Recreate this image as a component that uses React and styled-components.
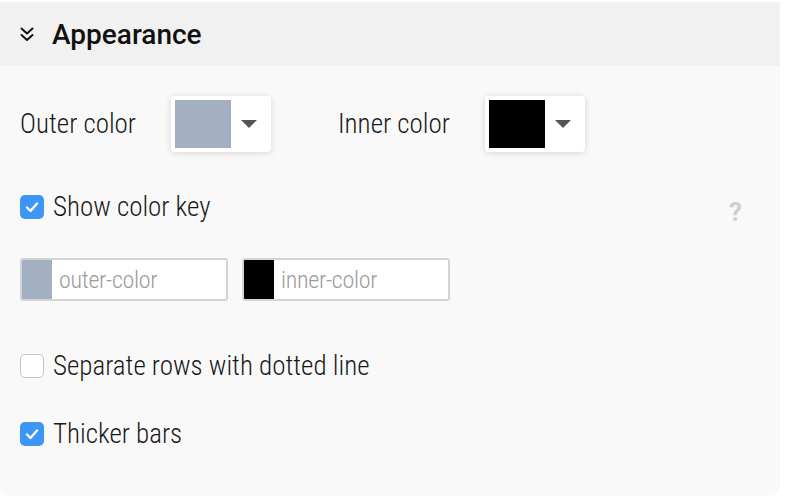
import React from "react";
import styled, { createGlobalStyle } from "styled-components";

const Global = createGlobalStyle`
  html, body { margin: 0; padding: 0; background: #ffffff; }
  body { font-family: Roboto, "Noto Sans", sans-serif; }
`;

const Panel = styled.section`
  width: 780px;
  margin-top: 2px;
  background: #f9f9f9;
  border-radius: 0 0 10px 10px;
  padding-bottom: 46px;
`;

const Header = styled.div`
  height: 64px;
  background: #f1f1f1;
  display: flex;
  align-items: center;
  padding-left: 20px;
  gap: 18px;
`;

const Title = styled.h2`
  margin: 0;
  font-family: Roboto, sans-serif;
  font-weight: 500;
  font-size: 28px;
  color: #111;
`;

const Body = styled.div`
  display: flex;
  flex-direction: column;
  padding: 0 38px 0 20px;
`;

const Row = styled.div`
  display: flex;
  align-items: center;
  margin-top: ${(p) => p.$top}px;
  height: ${(p) => p.$h}px;
  justify-content: ${(p) => (p.$spread ? "space-between" : "flex-start")};
`;

const Label = styled.span`
  font-family: Roboto, sans-serif;
  font-weight: 300;
  font-size: 27px;
  font-stretch: condensed;
  color: #1a1a1a;
  margin-right: ${(p) => p.$mr || 0}px;
`;

const ColorGroup = styled.div`
  display: flex;
  align-items: center;
  margin-right: 67px;
`;

const Picker = styled.button`
  display: flex;
  align-items: center;
  padding: 4px;
  width: 100px;
  height: 56px;
  box-sizing: border-box;
  background: #fff;
  border: none;
  border-radius: 4px;
  box-shadow: 0 1px 7px rgba(0, 0, 0, 0.14);
  cursor: pointer;
`;

const Swatch = styled.span`
  display: block;
  width: 56px;
  height: 48px;
  background: ${(p) => p.$color};
`;

const Arrow = styled.span`
  flex: 1;
  display: flex;
  justify-content: center;
  &::after {
    content: "";
    border-left: 8px solid transparent;
    border-right: 8px solid transparent;
    border-top: 8px solid #555;
  }
`;

const Check = styled.span`
  width: 24px;
  height: 24px;
  box-sizing: border-box;
  border-radius: 5px;
  display: flex;
  align-items: center;
  justify-content: center;
  margin-right: 9px;
  background: ${(p) => (p.$on ? "#3d95f5" : "#fff")};
  border: ${(p) => (p.$on ? "none" : "1.5px solid #c4c4c4")};
`;

const CheckLabel = styled.label`
  display: flex;
  align-items: center;
  cursor: pointer;
`;

const Help = styled.span`
  font-family: Roboto, sans-serif;
  font-weight: 700;
  font-size: 26px;
  color: #cfcfcf;
  margin-top: 10px;
`;

const KeyRow = styled.div`
  display: flex;
  gap: 14px;
  margin-top: 35px;
`;

const KeyInput = styled.div`
  display: flex;
  align-items: center;
  width: 208px;
  height: 43px;
  box-sizing: border-box;
  border: 2px solid #d4d4d4;
  border-radius: 3px;
  background: #fff;
  overflow: hidden;
`;

const KeySwatch = styled.span`
  width: 32px;
  align-self: stretch;
  margin: -2px 0 -2px -2px;
  border-radius: 3px 0 0 3px;
  background: ${(p) => p.$color};
`;

const KeyText = styled.span`
  font-family: Roboto, sans-serif;
  font-weight: 300;
  font-size: 24px;
  font-stretch: condensed;
  letter-spacing: -0.3px;
  color: #9b9b9b;
  margin-left: 7px;
`;

const Chevron = () => (
  <svg width="14" height="15" viewBox="0 0 14 15" fill="none" stroke="#111" strokeWidth="2" strokeLinecap="round" strokeLinejoin="round">
    <polyline points="1.5,1.5 7,6.5 12.5,1.5" />
    <polyline points="1.5,8 7,13 12.5,8" />
  </svg>
);

const Tick = () => (
  <svg width="16" height="16" viewBox="0 0 16 16" fill="none" stroke="#fff" strokeWidth="2.4" strokeLinecap="round" strokeLinejoin="round">
    <polyline points="3,8.5 6.5,12 13,4.5" />
  </svg>
);

const Checkbox = ({ on, children }) => (
  <CheckLabel>
    <Check $on={on}>{on && <Tick />}</Check>
    <Label>{children}</Label>
  </CheckLabel>
);

export default function App() {
  return (
    <>
      <Global />
      <Panel>
        <Header>
          <Chevron />
          <Title>Appearance</Title>
        </Header>
        <Body>
          <Row $top={30} $h={56}>
            <ColorGroup>
              <Label $mr={35}>Outer color</Label>
              <Picker>
                <Swatch $color="#a3b0c1" />
                <Arrow />
              </Picker>
            </ColorGroup>
            <ColorGroup>
              <Label $mr={35}>Inner color</Label>
              <Picker>
                <Swatch $color="#000" />
                <Arrow />
              </Picker>
            </ColorGroup>
          </Row>
          <Row $top={39} $h={32} $spread>
            <Checkbox on>Show color key</Checkbox>
            <Help>?</Help>
          </Row>
          <KeyRow>
            <KeyInput>
              <KeySwatch $color="#a3b0c1" />
              <KeyText>outer-color</KeyText>
            </KeyInput>
            <KeyInput>
              <KeySwatch $color="#000" />
              <KeyText>inner-color</KeyText>
            </KeyInput>
          </KeyRow>
          <Row $top={49} $h={32}>
            <Checkbox>Separate rows with dotted line</Checkbox>
          </Row>
          <Row $top={36} $h={32}>
            <Checkbox on>Thicker bars</Checkbox>
          </Row>
        </Body>
      </Panel>
    </>
  );
}
